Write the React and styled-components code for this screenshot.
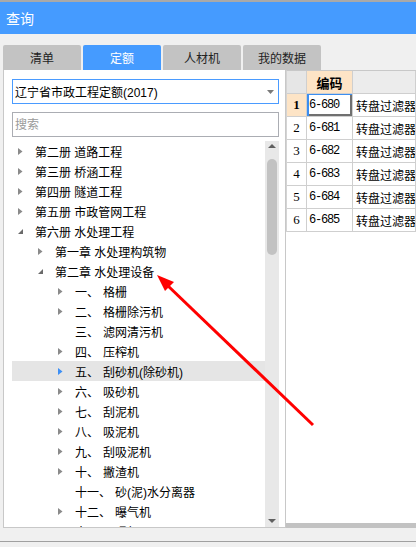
import React from 'react';
import styled, { createGlobalStyle } from 'styled-components';

const GlobalStyle = createGlobalStyle`
  html, body { margin: 0; padding: 0; background: #f0f0f0; }
  body {
    font-family: "Liberation Sans", "Noto Sans CJK SC", sans-serif;
    font-size: 12px;
    color: #000;
  }
`;

const Window = styled.div`
  position: relative;
  width: 416px;
  height: 547px;
  box-sizing: border-box;
  overflow: hidden;
  background: #f0f0f0;
  border-top: 2px solid #a9a9a9;
  display: flex;
  flex-direction: column;
`;

const TitleBar = styled.div`
  flex: none;
  height: 32px;
  background: #459bff;
  color: #fff;
  font-size: 14px;
  display: flex;
  align-items: center;
  padding-left: 6px;
`;

const TabBar = styled.div`
  flex: none;
  display: flex;
  gap: 2px;
  height: 25px;
  padding: 11px 0 0 3px;
`;

const Tab = styled.div`
  width: 78px;
  height: 25px;
  border-radius: 2px 2px 0 0;
  background: ${p => (p.$active ? '#459bff' : '#c3c3c3')};
  color: ${p => (p.$active ? '#fff' : '#222')};
  display: flex;
  align-items: center;
  justify-content: center;
  font-size: 12px;
`;

const Content = styled.div`
  flex: none;
  height: 458px;
  display: flex;
  margin-left: 3px;
`;

const LeftPanel = styled.div`
  width: 282px;
  box-sizing: border-box;
  background: #fff;
  border-left: 1px solid #c8c8c8;
  border-bottom: 1px solid #c8c8c8;
  padding: 9px 6px 0 8px;
  display: flex;
  flex-direction: column;
`;

const Select = styled.div`
  flex: none;
  height: 25px;
  box-sizing: border-box;
  border: 1px solid #4a9bff;
  display: flex;
  align-items: center;
  padding: 0 4px 0 2px;
  font-size: 12px;
`;

const Caret = styled.svg`
  margin-left: auto;
  flex: none;
`;

const Search = styled.input`
  flex: none;
  margin-top: 8px;
  height: 25px;
  box-sizing: border-box;
  border: 1px solid #abadb3;
  padding: 0 2px;
  font-family: "Liberation Sans", "Noto Sans CJK SC", sans-serif;
  font-size: 12px;
  outline: none;
  &::placeholder { color: #9a9a9a; }
`;

const Tree = styled.div`
  flex: 1;
  min-height: 0;
  margin-top: 4px;
  display: flex;
`;

const TreeList = styled.div`
  flex: 1;
  overflow: hidden;
`;

const Row = styled.div`
  height: 20px;
  display: flex;
  align-items: center;
  padding-left: ${p => 6 + p.$level * 20}px;
  background: ${p => (p.$selected ? '#e5e5e5' : 'transparent')};
  white-space: nowrap;
`;

const Toggle = styled.span`
  flex: none;
  width: 17px;
  display: flex;
  align-items: center;
`;

const Num = styled.span`
  margin-right: 4px;
`;

const VScroll = styled.div`
  flex: none;
  width: 14px;
  background: #e8e8e8;
  display: flex;
  flex-direction: column;
  align-items: center;
`;

const ScrollArrow = styled.div`
  flex: none;
  height: 14px;
  display: flex;
  align-items: ${p => (p.$down ? 'flex-end' : 'flex-start')};
  padding: ${p => (p.$down ? '0 0 4px' : '3px 0 0')};
  box-sizing: border-box;
`;

const Thumb = styled.div`
  width: 10px;
  height: 96px;
  margin-top: 4px;
  border-radius: 5px;
  background: #c2c2c2;
`;

const Spacer = styled.div`
  flex: 1;
`;

const RightPanel = styled.div`
  flex: 1;
  background: #fff;
  border-left: 1px solid #c8c8c8;
  display: flex;
  flex-direction: column;
  overflow: hidden;
`;

const Grid = styled.div`
  display: grid;
  grid-template-columns: 20px 46px 1fr;
  border-top: 1px solid #c8c8c8;
  border-left: 1px solid #d4d4d4;
`;

const Cell = styled.div`
  height: 22px;
  border-right: 1px solid #cfcfcf;
  border-bottom: 1px solid #cfcfcf;
  display: flex;
  align-items: center;
  white-space: nowrap;
  overflow: hidden;
`;

const HeadCell = styled(Cell)`
  background: ${p => p.$bg};
  justify-content: center;
  font-weight: bold;
  font-size: 13px;
`;

const RowNum = styled(Cell)`
  justify-content: center;
  font-family: "Liberation Serif", serif;
  font-size: 13px;
  background: ${p => (p.$current ? '#fde4c6' : '#fff')};
  font-weight: ${p => (p.$current ? 'bold' : 'normal')};
`;

const CodeCell = styled(Cell)`
  padding-left: 2px;
  font-family: "Liberation Mono", monospace;
  font-size: 12px;
  letter-spacing: -1.2px;
  box-shadow: ${p => (p.$focus ? 'inset 2px 1px 0 #3c8ef0, inset -2px -2px 0 #707070' : 'none')};
`;

const NameCell = styled(Cell)`
  padding-left: 3px;
  font-size: 12px;
`;

const HScroll = styled.div`
  flex: none;
  height: 5px;
  background: #c2c2c2;
`;

const Footer = styled.div`
  flex: none;
  height: 13px;
  border-bottom: 1px solid #a0a0a0;
`;

const Overlay = styled.svg`
  position: absolute;
  left: 0;
  top: 0;
  pointer-events: none;
`;

const Collapsed = ({ color = '#8a8a8a' }) => (
  <svg width="5" height="7" viewBox="0 0 5 7"><polygon points="0,0 4.5,3.5 0,7" fill={color} /></svg>
);

const Expanded = () => (
  <svg width="5" height="5" viewBox="0 0 5 5"><polygon points="5,0 5,5 0,5" fill="#6a6a6a" /></svg>
);

const tree = [
  { level: 0, text: '第二册 道路工程', state: 'c' },
  { level: 0, text: '第三册 桥涵工程', state: 'c' },
  { level: 0, text: '第四册 隧道工程', state: 'c' },
  { level: 0, text: '第五册 市政管网工程', state: 'c' },
  { level: 0, text: '第六册 水处理工程', state: 'e' },
  { level: 1, text: '第一章 水处理构筑物', state: 'c' },
  { level: 1, text: '第二章 水处理设备', state: 'e' },
  { level: 2, num: '一、', text: '格栅', state: 'c' },
  { level: 2, num: '二、', text: '格栅除污机', state: 'c' },
  { level: 2, num: '三、', text: '滤网清污机', state: '' },
  { level: 2, num: '四、', text: '压榨机', state: 'c' },
  { level: 2, num: '五、', text: '刮砂机(除砂机)', state: 'c', selected: true },
  { level: 2, num: '六、', text: '吸砂机', state: 'c' },
  { level: 2, num: '七、', text: '刮泥机', state: 'c' },
  { level: 2, num: '八、', text: '吸泥机', state: 'c' },
  { level: 2, num: '九、', text: '刮吸泥机', state: 'c' },
  { level: 2, num: '十、', text: '撇渣机', state: 'c' },
  { level: 2, num: '十一、', text: '砂(泥)水分离器', state: '' },
  { level: 2, num: '十二、', text: '曝气机', state: 'c' },
  { level: 2, num: '十三、', text: '曝气器', state: 'c' },
];

const rows = ['680', '681', '682', '683', '684', '685'];

const App = () => {
  return (
    <Window>
      <GlobalStyle />
      <TitleBar>查询</TitleBar>
      <TabBar>
        <Tab>清单</Tab>
        <Tab $active>定额</Tab>
        <Tab>人材机</Tab>
        <Tab>我的数据</Tab>
      </TabBar>
      <Content>
        <LeftPanel>
          <Select>
            辽宁省市政工程定额(2017)
            <Caret width="7" height="4" viewBox="0 0 7 4"><polygon points="0,0 7,0 3.5,4" fill="#7a7a7a" /></Caret>
          </Select>
          <Search placeholder="搜索" />
          <Tree>
            <TreeList>
              {tree.map((item, i) => (
                <Row key={i} $level={item.level} $selected={item.selected}>
                  <Toggle>
                    {item.state === 'c' && <Collapsed color={item.selected ? '#3d8ff5' : '#8a8a8a'} />}
                    {item.state === 'e' && <Expanded />}
                  </Toggle>
                  {item.num && <Num>{item.num}</Num>}
                  <span>{item.text}</span>
                </Row>
              ))}
            </TreeList>
            <VScroll>
              <ScrollArrow>
                <svg width="8" height="4" viewBox="0 0 8 4"><polygon points="0,4 8,4 4,0" fill="#606060" /></svg>
              </ScrollArrow>
              <Thumb />
              <Spacer />
              <ScrollArrow $down>
                <svg width="8" height="4" viewBox="0 0 8 4"><polygon points="0,0 8,0 4,4" fill="#606060" /></svg>
              </ScrollArrow>
            </VScroll>
          </Tree>
        </LeftPanel>
        <RightPanel>
          <Grid>
            <HeadCell $bg="#e6e6e6" />
            <HeadCell $bg="#fde4c6">编码</HeadCell>
            <HeadCell $bg="#ececec" />
            {rows.map((code, i) => (
              <React.Fragment key={code}>
                <RowNum $current={i === 0}>{i + 1}</RowNum>
                <CodeCell $focus={i === 0}>6-{code}</CodeCell>
                <NameCell>转盘过滤器</NameCell>
              </React.Fragment>
            ))}
          </Grid>
          <Spacer />
          <HScroll />
        </RightPanel>
      </Content>
      <Footer />
      <Overlay width="416" height="547" viewBox="0 0 416 547">
        <line x1="313" y1="423" x2="166" y2="282" stroke="#ff0000" strokeWidth="3" />
        <polygon points="157,273 165,289 174,280" fill="#ff0000" />
      </Overlay>
    </Window>
  );
};

export default App;
